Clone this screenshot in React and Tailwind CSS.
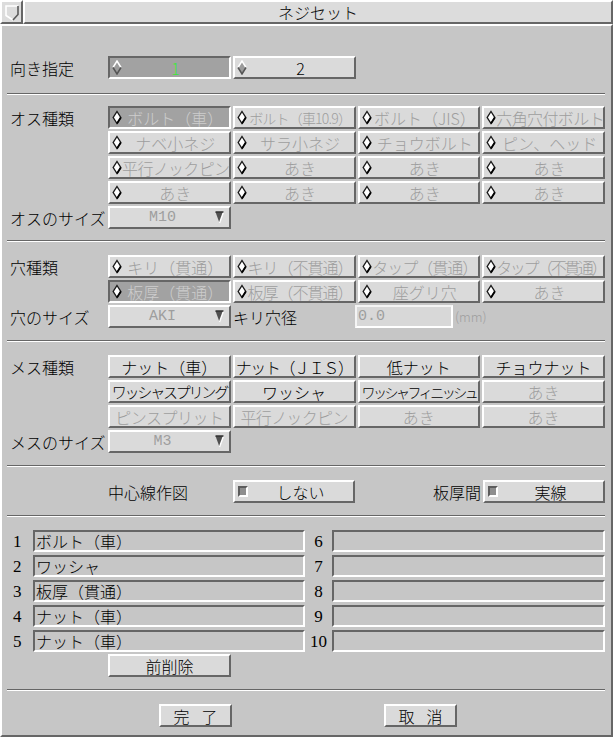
import React from 'react';

// Motif style bevels
const RAISED = 'border-2 border-t-white border-l-white border-r-[#666666] border-b-[#666666]';
const SUNKEN = 'border-2 border-t-[#666666] border-l-[#666666] border-r-white border-b-white';
const GRAY_TEXT = 'text-[#9e9e9e]';

const Diamond = ({ solid }) => (
  <svg width="10" height="15" viewBox="0 0 10 15" className="shrink-0">
    {solid ? (
      <>
        <polygon points="5,1 9,7.5 5,14 1,7.5" fill="#9c9c9c" />
        <polyline points="1,7.5 5,1 9,7.5" fill="none" stroke="#ffffff" strokeWidth="1.5" />
        <polyline points="1,7.5 5,14 9,7.5" fill="none" stroke="#555555" strokeWidth="1.5" />
      </>
    ) : (
      <>
        <polygon points="5,1.5 8.8,7.5 5,13.5 1.2,7.5" fill="#ffffff" stroke="#1a1a1a" strokeWidth="1.4" />
        <polyline points="5,13.5 8.8,7.5" fill="none" stroke="#000000" strokeWidth="1.8" />
      </>
    )}
  </svg>
);

const Square = () => (
  <span className="w-[10px] h-[11px] shrink-0 bg-[#8e8e8e] border-2 border-t-[#5c5c5c] border-l-[#5c5c5c] border-r-white border-b-white" />
);

// toggle button, optionally with a diamond indicator
const Toggle = ({ label, ind, solid, on, disabled, green, fit = '' }) => {
  let color = 'text-black';
  if (green) color = 'text-[#3ee83e]';
  else if (disabled && on) color = 'text-[#cdcdcd]';
  else if (disabled) color = GRAY_TEXT;
  return (
    <div
      className={`h-[23px] flex items-center overflow-hidden whitespace-nowrap ${
        on ? 'bg-[#a2a2a2] ' + SUNKEN : 'bg-[#dadada] ' + RAISED
      }`}
    >
      {ind && (
        <span className="pl-[2px] flex items-center">
          <Diamond solid={solid} />
        </span>
      )}
      <span className={`flex-1 text-center leading-none ${color} ${fit}`}>{label}</span>
    </div>
  );
};

const OptionMenu = ({ value }) => (
  <div className={`h-[23px] bg-[#dadada] ${RAISED} flex items-center`}>
    <span className={`flex-1 text-center leading-none text-[15px] font-['Liberation_Mono',monospace] ${GRAY_TEXT}`}>
      {value}
    </span>
    <svg width="9" height="13" viewBox="0 0 9 13" className="mr-[5px] shrink-0">
      <polygon points="0.5,1 8.5,1 4.5,12" fill="#505050" />
      <line x1="8.5" y1="1" x2="4.5" y2="12" stroke="#ffffff" strokeWidth="1.4" />
      <line x1="0.5" y1="1" x2="8.5" y2="1" stroke="#303030" strokeWidth="1.5" />
    </svg>
  </div>
);

const Separator = ({ className = '' }) => (
  <div className={`ml-[-3px] h-[2px] border-t border-t-[#666666] border-b border-b-white ${className}`} />
);

const Label = ({ children }) => (
  <div className="w-[98px] shrink-0 h-[23px] flex items-center leading-none whitespace-nowrap">{children}</div>
);

const Grid = ({ children }) => (
  <div className="w-[497px] grid grid-cols-4 gap-x-[2px] gap-y-[2px]">{children}</div>
);

const Field = ({ text }) => (
  <div className={`h-[22px] ${SUNKEN} bg-[#c6c6c6] flex items-center pl-[1px] leading-none whitespace-nowrap`}>
    {text}
  </div>
);

const PushButton = ({ children, className = '' }) => (
  <div className={`h-[23px] bg-[#dadada] ${RAISED} flex items-center justify-center leading-none ${className}`}>
    {children}
  </div>
);

const maleRows = [
  [
    { label: 'ボルト（車）', on: true },
    { label: 'ボルト（車10.9）', fit: 'tracking-[-0.8px] text-[14px]' },
    { label: 'ボルト（JIS）' },
    { label: '六角穴付ボルト', fit: 'tracking-[-0.6px]' },
  ],
  [{ label: 'ナベ小ネジ' }, { label: 'サラ小ネジ' }, { label: 'チョウボルト' }, { label: 'ピン、ヘッド' }],
  [{ label: '平行ノックピン', fit: 'tracking-[-0.6px]' }, { label: 'あき' }, { label: 'あき' }, { label: 'あき' }],
  [{ label: 'あき' }, { label: 'あき' }, { label: 'あき' }, { label: 'あき' }],
];

const holeRows = [
  [
    { label: 'キリ（貫通）' },
    { label: 'キリ（不貫通）', fit: 'tracking-[-1px]' },
    { label: 'タップ（貫通）', fit: 'tracking-[-1px]' },
    { label: 'タップ（不貫通）', fit: 'tracking-[-2.4px]' },
  ],
  [
    { label: '板厚（貫通）', on: true },
    { label: '板厚（不貫通）', fit: 'tracking-[-1px]' },
    { label: '座グリ穴' },
    { label: 'あき' },
  ],
];

const femaleRows = [
  [
    { label: 'ナット（車）' },
    { label: 'ナット（ＪＩＳ）', fit: 'tracking-[-1.4px]' },
    { label: '低ナット' },
    { label: 'チョウナット' },
  ],
  [
    { label: 'ワッシャスプリング', fit: 'text-[15px] tracking-[-2.2px]' },
    { label: 'ワッシャ' },
    { label: 'ワッシャフィニッシュ', fit: 'text-[14px] tracking-[-2.5px]' },
    { label: 'あき', disabled: true },
  ],
  [
    { label: 'ピンスプリット', disabled: true, fit: 'tracking-[-0.5px]' },
    { label: '平行ノックピン', disabled: true, fit: 'tracking-[-0.6px]' },
    { label: 'あき', disabled: true },
    { label: 'あき', disabled: true },
  ],
];

const list = ['ボルト（車）', 'ワッシャ', '板厚（貫通）', 'ナット（車）', 'ナット（車）'];

export default function App() {
  return (
    <div className="w-[613px] h-[737px] bg-[#c6c6c6] flex flex-col text-[16px] font-light text-black font-['Noto_Sans_CJK_JP',sans-serif] overflow-hidden">
      {/* title bar */}
      <div className="h-[24px] flex shrink-0">
        <div className={`w-[23px] h-[24px] bg-[#dcdcdc] ${RAISED} flex items-center justify-center`}>
          <svg width="17" height="19" viewBox="0 0 17 19">
            <polyline points="10,17 3,12.5 3,3 15,3" fill="none" stroke="#ffffff" strokeWidth="1.6" />
            <polyline points="15,3 15,11.5 10,17" fill="none" stroke="#5a5a5a" strokeWidth="1.6" />
          </svg>
        </div>
        <div className={`flex-1 h-[24px] bg-[#dcdcdc] ${RAISED} flex items-center justify-center leading-none`}>
          ネジセット
        </div>
      </div>

      {/* body */}
      <div className="flex-1 flex flex-col border-2 border-t-white border-l-white border-r-[#666666] border-b-[#666666] pl-[8px] pr-[6px]">
        {/* orientation */}
        <div className="flex mt-[30px]">
          <Label>向き指定</Label>
          <div className="flex gap-x-[2px]">
            <div className="w-[123px]">
              <Toggle label="1" ind solid on green />
            </div>
            <div className="w-[123px]">
              <Toggle label="2" ind solid />
            </div>
          </div>
        </div>

        <Separator className="mt-[14px]" />

        {/* male */}
        <div className="flex mt-[11px]">
          <Label>オス種類</Label>
          <Grid>
            {maleRows.flat().map((b, i) => (
              <Toggle key={i} label={b.label} ind on={b.on} disabled fit={b.fit} />
            ))}
          </Grid>
        </div>
        <div className="flex mt-[2px]">
          <Label>オスのサイズ</Label>
          <div className="w-[123px]">
            <OptionMenu value="M10" />
          </div>
        </div>

        <Separator className="mt-[11px]" />

        {/* hole */}
        <div className="flex mt-[13px]">
          <Label>穴種類</Label>
          <Grid>
            {holeRows.flat().map((b, i) => (
              <Toggle key={i} label={b.label} ind on={b.on} disabled fit={b.fit} />
            ))}
          </Grid>
        </div>
        <div className="flex mt-[2px]">
          <Label>穴のサイズ</Label>
          <div className="w-[123px]">
            <OptionMenu value="AKI" />
          </div>
          <div className="w-[124px] pl-[2px] h-[23px] flex items-center leading-none">キリ穴径</div>
          <div className="w-[98px] h-[23px] border-2 border-t-[#f4f4f4] border-l-[#f4f4f4] border-r-white border-b-white bg-[#d8d8d8] flex items-center pl-[1px]">
            <span className={`leading-none text-[15px] font-['Liberation_Mono',monospace] ${GRAY_TEXT}`}>0.0</span>
          </div>
          <div className={`h-[23px] pl-[2px] flex items-center leading-none text-[13px] ${GRAY_TEXT}`}>(mm)</div>
        </div>

        <Separator className="mt-[12px]" />

        {/* female */}
        <div className="flex mt-[13px]">
          <Label>メス種類</Label>
          <Grid>
            {femaleRows.flat().map((b, i) => (
              <Toggle key={i} label={b.label} disabled={b.disabled} fit={b.fit} />
            ))}
          </Grid>
        </div>
        <div className="flex mt-[2px]">
          <Label>メスのサイズ</Label>
          <div className="w-[123px]">
            <OptionMenu value="M3" />
          </div>
        </div>

        <Separator className="mt-[12px]" />

        {/* center line */}
        <div className="flex mt-[13px] h-[23px]">
          <div className="w-[98px] shrink-0" />
          <div className="w-[125px] flex items-center leading-none">中心線作図</div>
          <div className={`w-[122px] h-[23px] bg-[#dadada] ${RAISED} flex items-center`}>
            <span className="pl-[3px] flex items-center">
              <Square />
            </span>
            <span className="flex-1 text-center leading-none">しない</span>
          </div>
          <div className="w-[128px] flex items-center justify-end pr-[2px] leading-none">板厚間</div>
          <div className={`w-[122px] h-[23px] bg-[#dadada] ${RAISED} flex items-center`}>
            <span className="pl-[3px] flex items-center">
              <Square />
            </span>
            <span className="flex-1 text-center leading-none">実線</span>
          </div>
        </div>

        <Separator className="mt-[12px]" />

        {/* selected list */}
        <div className="flex flex-col gap-y-[3px] mt-[13px]">
          {list.map((t, i) => (
            <div key={i} className="flex items-center">
              <div className="w-[23px] pl-[3px] leading-none font-['Liberation_Serif',serif] text-[17px]">{i + 1}</div>
              <div className="w-[272px]">
                <Field text={t} />
              </div>
              <div className="w-[27px] text-center leading-none font-['Liberation_Serif',serif] text-[17px]">{i + 6}</div>
              <div className="w-[273px]">
                <Field text="" />
              </div>
            </div>
          ))}
        </div>
        <div className="flex mt-[2px]">
          <div className="w-[98px] shrink-0" />
          <PushButton className="w-[123px]">前削除</PushButton>
        </div>

        <Separator className="mt-[12px]" />

        {/* footer */}
        <div className="flex mt-[13px] pl-[149px] gap-x-[152px]">
          <PushButton className="w-[73px] gap-x-[12px]">
            <span>完</span>
            <span>了</span>
          </PushButton>
          <PushButton className="w-[73px] gap-x-[12px]">
            <span>取</span>
            <span>消</span>
          </PushButton>
        </div>
      </div>
    </div>
  );
}
